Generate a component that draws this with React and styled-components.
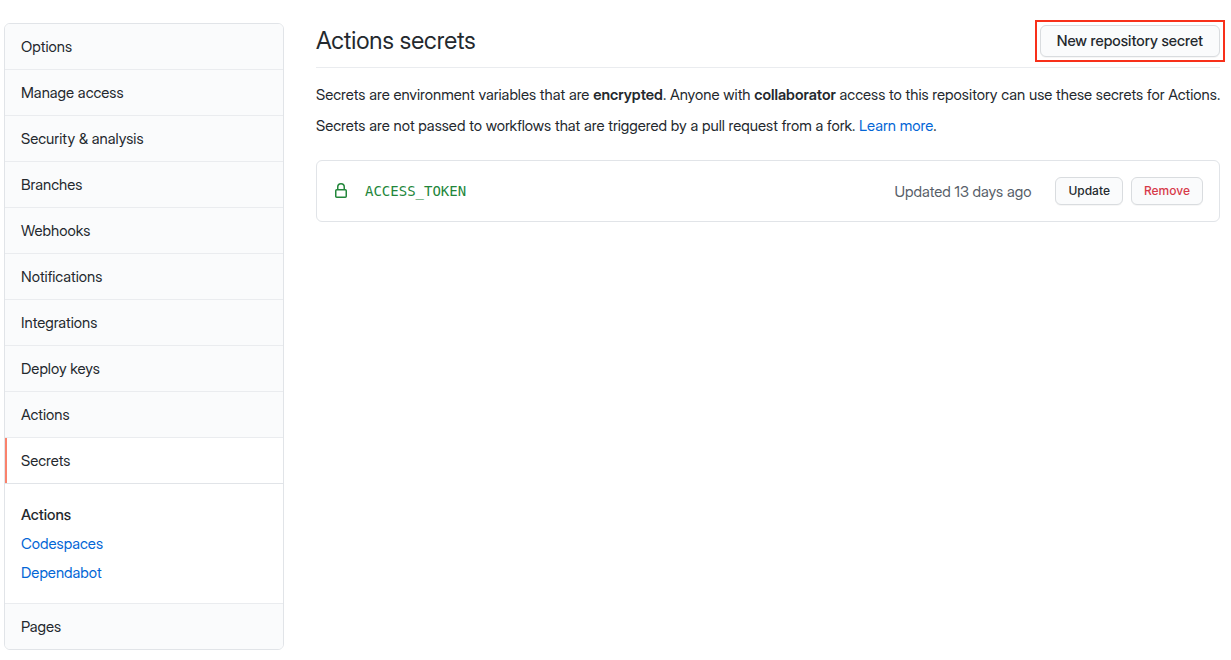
import React from 'react';
import styled, { createGlobalStyle } from 'styled-components';

const GlobalStyle = createGlobalStyle`
  * {
    box-sizing: border-box;
  }

  body {
    margin: 0;
    background: #ffffff;
    color: #24292e;
    font-family: 'Inter Display', Inter, 'Liberation Sans', sans-serif;
    font-size: 15px;
    line-height: 21px;
  }
`;

const Page = styled.div`
  display: flex;
  align-items: flex-start;
  gap: 32px;
  padding: 23px 11px 10px 4px;
`;

const Sidebar = styled.nav`
  flex: 0 0 280px;
  background: #ffffff;
  border: 1px solid #e1e4e8;
  border-radius: 6px;
  overflow: hidden;
`;

const MenuItem = styled.a`
  display: block;
  padding: 12px 16px;
  background: ${({ $selected }) => ($selected ? '#ffffff' : '#fafbfc')};
  box-shadow: ${({ $selected }) => ($selected ? 'inset 2px 0 0 #f9826c' : 'none')};
  color: #24292e;
  text-decoration: none;

  & + &,
  ul + & {
    border-top: 1px solid #eaecef;
  }
`;

const SubMenu = styled.ul`
  display: flex;
  flex-direction: column;
  gap: 8px;
  margin: 0;
  padding: 20px 16px;
  border-top: 1px solid #e1e4e8;
  list-style: none;
`;

const Link = styled.a`
  color: #0366d6;
  text-decoration: none;
`;

const CurrentLink = styled(Link)`
  color: #24292e;
  font-weight: 500;
`;

const Main = styled.main`
  flex: 1;
  min-width: 0;
`;

const Header = styled.header`
  display: flex;
  align-items: center;
  justify-content: space-between;
  margin-bottom: 16px;
  padding-bottom: 8px;
  border-bottom: 1px solid #eaecef;
`;

const Title = styled.h1`
  margin: 0;
  font-size: 24px;
  font-weight: 400;
  line-height: 36px;
`;

const Description = styled.div`
  margin-right: -4px;
`;

const Paragraph = styled.p`
  margin: 0 0 10px;
`;

const Strong = styled.strong`
  font-weight: 600;
`;

const Button = styled.button`
  padding: 5px 16px;
  border: 1px solid #d9dcdf;
  border-radius: 6px;
  background: #fafbfc;
  box-shadow: 0 1px 0 rgba(27, 31, 35, 0.04);
  color: ${({ $danger }) => ($danger ? '#d73a49' : '#24292e')};
  font-family: inherit;
  font-size: 15px;
  font-weight: 500;
  line-height: 20px;
  white-space: nowrap;
  cursor: pointer;
`;

const Highlight = styled.div`
  display: flex;
  outline: 2px solid #f8301a;
  outline-offset: 3px;
`;

const SmallButton = styled(Button)`
  padding: 3px 12px;
  font-family: Inter, 'Liberation Sans', sans-serif;
  font-size: 12px;
`;

const SecretList = styled.ul`
  margin: 24px 0 0;
  padding: 0;
  border: 1px solid #e1e4e8;
  border-radius: 6px;
  list-style: none;
`;

const SecretRow = styled.li`
  display: flex;
  align-items: center;
  padding: 16px;
`;

const LockIcon = styled.svg`
  flex: none;
  margin-right: 16px;
  fill: #22863a;
`;

const SecretName = styled.code`
  flex: 1;
  color: #22863a;
  font-family: 'DejaVu Sans Mono', 'Liberation Mono', monospace;
  font-size: 14px;
`;

const Updated = styled.span`
  margin-right: 24px;
  color: #586069;
`;

const Actions = styled.div`
  display: flex;
  gap: 8px;
`;

const menuItems = [
  'Options',
  'Manage access',
  'Security & analysis',
  'Branches',
  'Webhooks',
  'Notifications',
  'Integrations',
  'Deploy keys',
  'Actions',
];

export default function App() {
  return (
    <>
      <GlobalStyle />
      <Page>
        <Sidebar aria-label="Repository settings">
          {menuItems.map((item) => (
            <MenuItem href="#" key={item}>{item}</MenuItem>
          ))}
          <MenuItem href="#" $selected>Secrets</MenuItem>
          <SubMenu>
            <li><CurrentLink href="#" aria-current="page">Actions</CurrentLink></li>
            <li><Link href="#">Codespaces</Link></li>
            <li><Link href="#">Dependabot</Link></li>
          </SubMenu>
          <MenuItem href="#">Pages</MenuItem>
        </Sidebar>
        <Main>
          <Header>
            <Title>Actions secrets</Title>
            <Highlight>
              <Button type="button">New repository secret</Button>
            </Highlight>
          </Header>
          <Description>
            <Paragraph>
              Secrets are environment variables that are <Strong>encrypted</Strong>. Anyone with{' '}
              <Strong>collaborator</Strong> access to this repository can use these secrets for Actions.
            </Paragraph>
            <Paragraph>
              Secrets are not passed to workflows that are triggered by a pull request from a fork.{' '}
              <Link href="#">Learn more</Link>.
            </Paragraph>
          </Description>
          <SecretList>
            <SecretRow>
              <LockIcon width="16" height="16" viewBox="0 0 16 16" aria-hidden="true">
                <path
                  fillRule="evenodd"
                  d="M4 4v2h-.25A1.75 1.75 0 002 7.75v5.5c0 .966.784 1.75 1.75 1.75h8.5A1.75 1.75 0 0014 13.25v-5.5A1.75 1.75 0 0012.25 6H12V4a4 4 0 10-8 0zm6.5 2V4a2.5 2.5 0 10-5 0v2h5zM12 7.5h.25a.25.25 0 01.25.25v5.5a.25.25 0 01-.25.25h-8.5a.25.25 0 01-.25-.25v-5.5a.25.25 0 01.25-.25H12z"
                />
              </LockIcon>
              <SecretName>ACCESS_TOKEN</SecretName>
              <Updated>Updated 13 days ago</Updated>
              <Actions>
                <SmallButton type="button">Update</SmallButton>
                <SmallButton type="button" $danger>Remove</SmallButton>
              </Actions>
            </SecretRow>
          </SecretList>
        </Main>
      </Page>
    </>
  );
}
